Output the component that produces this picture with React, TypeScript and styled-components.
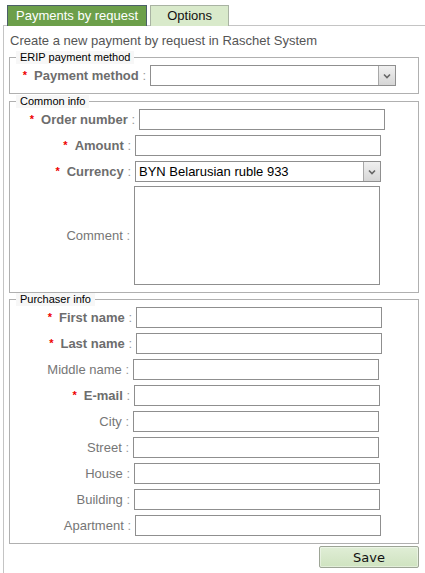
import React from 'react';
import styled, { createGlobalStyle } from 'styled-components';

const GlobalStyle = createGlobalStyle`
  html, body {
    margin: 0;
    padding: 0;
    background: #fff;
    font-family: "Liberation Sans", Arial, sans-serif;
  }
`;

interface FieldDef {
  label: string;
  required?: boolean;
  nudge?: number;
  kind?: 'input' | 'select' | 'textarea';
  value?: string;
}

const eripFields: FieldDef[] = [{ label: 'Payment method', required: true, nudge: 16, kind: 'select' }];

const commonFields: FieldDef[] = [
  { label: 'Order number', required: true, nudge: 5 },
  { label: 'Amount', required: true, nudge: 1 },
  { label: 'Currency', required: true, nudge: 1, kind: 'select', value: 'BYN Belarusian ruble 933' },
  { label: 'Comment', kind: 'textarea' },
];

const purchaserFields: FieldDef[] = [
  { label: 'First name', required: true, nudge: 2 },
  { label: 'Last name', required: true, nudge: 2 },
  { label: 'Middle name', nudge: -1 },
  { label: 'E-mail', required: true },
  { label: 'City', nudge: -1 },
  { label: 'Street', nudge: -1 },
  { label: 'House' },
  { label: 'Building' },
  { label: 'Apartment', nudge: 1 },
];

function Chevron() {
  return (
    <svg width="8" height="6" viewBox="0 0 8 6">
      <path d="M1 1.5 L4 4.5 L7 1.5" fill="none" stroke="#666" strokeWidth="1.6" />
    </svg>
  );
}

function Field({ f }: { f: FieldDef }) {
  const kind = f.kind || 'input';
  return (
    <Row $tall={kind === 'textarea'} $nudge={f.nudge || 0}>
      <Label $bold={!!f.required}>
        {f.required && <Req>*</Req>}
        {f.label} <Colon>:</Colon>
      </Label>
      {kind === 'input' && <TextInput type="text" />}
      {kind === 'textarea' && <TextArea />}
      {kind === 'select' && (
        <SelectBox>
          <SelectValue>{f.value || ''}</SelectValue>
          <ArrowButton>
            <Chevron />
          </ArrowButton>
        </SelectBox>
      )}
    </Row>
  );
}

function Group({ title, fields }: { title: string; fields: FieldDef[] }) {
  return (
    <Fieldset>
      <Legend>{title}</Legend>
      <Rows>
        {fields.map((f) => (
          <Field key={f.label} f={f} />
        ))}
      </Rows>
    </Fieldset>
  );
}

export default function App() {
  return (
    <Page>
      <GlobalStyle />
      <TabBar>
        <Tab $active>Payments by request</Tab>
        <Tab>Options</Tab>
      </TabBar>
      <Panel>
        <Intro>Create a new payment by request in Raschet System</Intro>
        <Group title="ERIP payment method" fields={eripFields} />
        <Group title="Common info" fields={commonFields} />
        <Group title="Purchaser info" fields={purchaserFields} />
        <Footer>
          <SaveButton>Save</SaveButton>
        </Footer>
      </Panel>
    </Page>
  );
}

const Page = styled.div`
  padding: 5px 0 0 3px;
  width: 422px;
  min-height: 568px;
  display: flex;
  flex-direction: column;
`;

const TabBar = styled.div`
  display: flex;
  gap: 3px;
  padding-left: 4px;
`;

const Tab = styled.div<{ $active?: boolean }>`
  box-sizing: border-box;
  height: 21px;
  min-width: 79px;
  padding: 0 8px;
  font-size: 13px;
  line-height: 20px;
  text-align: center;
  color: ${(p) => (p.$active ? '#fff' : '#111')};
  background: ${(p) => (p.$active ? '#6c9f4a' : '#d9eacb')};
  border: 1px solid ${(p) => (p.$active ? '#4c5f68' : '#a9b3a3')};
  border-bottom: none;
  margin-bottom: -1px;
  position: relative;
  z-index: 1;
`;

const Panel = styled.div`
  flex: 1;
  border-top: 1px solid #c4c4c4;
  border-left: 1px solid #c4c4c4;
  padding: 7px 6px 0 5px;
`;

const Intro = styled.div`
  font-size: 13px;
  line-height: 16px;
  color: #555;
  margin: 0 0 2px 1px;
`;

const Fieldset = styled.fieldset`
  margin: 0;
  padding: 0 0 7px;
  border: 1px solid #b0b0b0;
  min-width: 0;

  &:first-of-type {
    margin-bottom: 1px;
  }
`;

const Legend = styled.legend`
  font-size: 11px;
  line-height: 13px;
  color: #000;
  background: #f7f7f7;
  padding: 0 4px;
  margin-left: 6px;
`;

const Rows = styled.div`
  display: flex;
  flex-direction: column;
  gap: 5px;
  padding-top: 1px;
`;

const Row = styled.div<{ $tall?: boolean; $nudge: number }>`
  display: grid;
  grid-template-columns: ${(p) => 120 + p.$nudge}px 246px;
  column-gap: 4px;
  align-items: center;
  height: ${(p) => (p.$tall ? '99px' : '21px')};
  margin-top: ${(p) => (p.$tall ? '-1px' : '0')};
`;

const Label = styled.div<{ $bold: boolean }>`
  text-align: right;
  white-space: nowrap;
  font-size: 13px;
  font-weight: ${(p) => (p.$bold ? 'bold' : 'normal')};
  color: ${(p) => (p.$bold ? '#6d6d6d' : '#767676')};
`;

const Req = styled.span`
  color: #e00;
  font-size: 11px;
  font-weight: bold;
  margin-right: 7px;
  vertical-align: 1px;
`;

const Colon = styled.span`
  color: #999;
  font-weight: normal;
`;

const TextInput = styled.input`
  box-sizing: border-box;
  display: block;
  width: 246px;
  height: 21px;
  margin: 0;
  padding: 1px 3px;
  border: 1px solid #8f8f8f;
  background: #fff;
  font: 13px "Liberation Sans", Arial, sans-serif;
  outline: none;
`;

const TextArea = styled.textarea`
  box-sizing: border-box;
  display: block;
  width: 246px;
  height: 99px;
  margin: 0;
  padding: 2px 3px;
  border: 1px solid #8f8f8f;
  resize: none;
  font: 13px "Liberation Sans", Arial, sans-serif;
  outline: none;
`;

const SelectBox = styled.div`
  box-sizing: border-box;
  display: flex;
  width: 246px;
  height: 21px;
  border: 1px solid #8f8f8f;
  background: #fff;
`;

const SelectValue = styled.div`
  flex: 1;
  font-size: 13px;
  line-height: 19px;
  padding-left: 3px;
  color: #000;
  white-space: nowrap;
  overflow: hidden;
`;

const ArrowButton = styled.div`
  width: 16px;
  display: flex;
  align-items: center;
  justify-content: center;
  border-left: 1px solid #a8a8a8;
  background: linear-gradient(#f0f0f0, #d6d6d6);
`;

const Footer = styled.div`
  display: flex;
  justify-content: flex-end;
  margin-top: 2px;
`;

const SaveButton = styled.button`
  box-sizing: border-box;
  width: 100px;
  height: 22px;
  padding: 0;
  font: 13px "DejaVu Sans", Verdana, sans-serif;
  color: #111;
  background: linear-gradient(#e0eed6, #cfe3c0);
  border: 1px solid #9da596;
  border-radius: 2px;
  box-shadow: inset 0 0 0 1px rgba(255, 255, 255, 0.4);
`;
